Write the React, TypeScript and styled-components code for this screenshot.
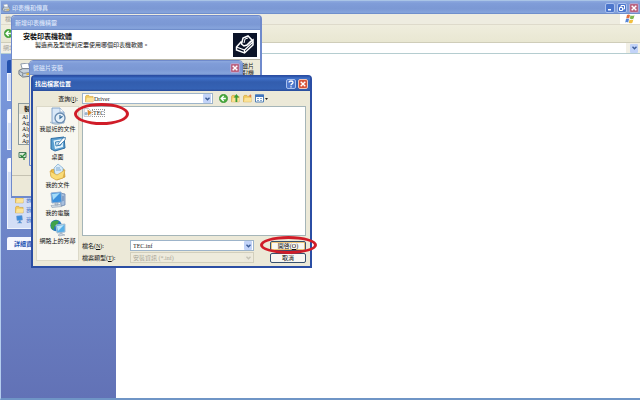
import React from "react";
import styled, { createGlobalStyle } from "styled-components";

const GlobalStyle = createGlobalStyle`
  * { box-sizing: border-box; }
  body {
    margin: 0;
    background: #fff;
    color: #111;
    font: 6px/8px "Liberation Serif", "Noto Sans CJK TC", serif;
  }
  button, input, select { font: inherit; color: inherit; margin: 0; padding: 0; }
  svg { display: block; flex: none; }
  h1, h2, p, ul { margin: 0; padding: 0; font-size: inherit; font-weight: inherit; }
  ul { list-style: none; }
`;

/* ---------- desktop and explorer window ---------- */

const Desktop = styled.div`
  position: relative;
  min-height: 100vh;
  display: flex;
  overflow: hidden;
`;

const Explorer = styled.main`
  flex: 1;
  min-width: 0;
  display: flex;
  flex-direction: column;
  border-left: 1px solid #b4cdee;
  border-bottom: 2px solid #6f95c6;
`;

const TitleBar = styled.header<{ $active?: boolean; $tall?: boolean }>`
  height: ${(p) => (p.$tall ? 15 : 14)}px;
  display: flex;
  align-items: center;
  gap: 2px;
  padding: 0 2px 0 ${(p) => (p.$active ? 2 : 3)}px;
  color: ${(p) => (p.$active ? "#fff" : "#dce6fa")};
  font-weight: ${(p) => (p.$active ? 700 : 500)};
  background: ${(p) =>
    p.$active
      ? "linear-gradient(#2a50a4, #3f70c8 15%, #325dae 40%, #3562b4 85%, #284b9a)"
      : "linear-gradient(#8ca8de, #7f9cd8 20%, #7b98d4 60%, #86a4dc 88%, #6685c4)"};
`;

const ExplorerTitle = styled(TitleBar)`
  height: 14px;
  border-top: 1px solid #a9c4e6;
  padding: 0 1px;
`;

const Title = styled.h1`
  flex: 1;
  white-space: nowrap;
`;

const CaptionButton = styled.button<{ $kind: "blue" | "muted" | "close" }>`
  width: 10px;
  height: 10px;
  display: grid;
  place-items: center;
  border: 1px solid ${(p) => (p.$kind === "blue" ? "#a9c0ee" : p.$kind === "close" ? "#f0c5b8" : "#b0a6d4")};
  border-radius: 2px;
  background: ${(p) => (p.$kind === "blue" ? "#4c76cc" : p.$kind === "close" ? "#d8553a" : "#bb6480")};
  color: #fff;
`;

const MenuBar = styled.nav`
  display: flex;
  align-items: stretch;
  height: 11px;
  background: #eeece0;
  border-bottom: 1px solid #dedacb;
  color: #9a9890;
`;

const MenuItem = styled.button`
  border: 0;
  background: none;
  padding: 0 4px;
`;

const FlagBox = styled.div`
  width: 20px;
  margin-left: auto;
  display: grid;
  place-items: center;
  background: #fff;
`;

const ToolBar = styled.div`
  height: 18px;
  display: flex;
  align-items: center;
  padding: 0 3px;
  background: linear-gradient(#efeddd, #e9e7d2);
  border-bottom: 1px solid #cfcdb9;
`;

const AddressBar = styled.div`
  height: 11px;
  display: flex;
  align-items: center;
  gap: 4px;
  padding: 0 2px;
  background: #f2f0e6;
  border-bottom: 1px solid #b5cdd0;
  color: #a5a39a;
`;

const AddressField = styled.input`
  flex: 1;
  min-width: 0;
  height: 10px;
  border: 0;
  background: #fff;
`;

const ExplorerBody = styled.div`
  flex: 1;
  display: flex;
`;

const Sidebar = styled.aside`
  width: 115px;
  display: flex;
  flex-direction: column;
  gap: 8px;
  padding: 6px 6px 0;
  background: linear-gradient(#7a9be0, #6c83c6 55%, #6272b6);
`;

const FolderView = styled.section`
  flex: 1;
  background: #fff;
`;

const TaskHeader = styled.h2<{ $primary?: boolean }>`
  height: 13px;
  padding: 3px 7px 2px;
  border-radius: 2px 2px 0 0;
  font-weight: 700;
  color: ${(p) => (p.$primary ? "#fff" : "#2a55b4")};
  background: ${(p) => (p.$primary ? "#2452ae" : "#f6f8fe")};
`;

const TaskList = styled.ul<{ $rows: number }>`
  min-height: ${(p) => p.$rows}px;
  display: flex;
  flex-direction: column;
  justify-content: flex-end;
  gap: 1px;
  padding: 4px 7px;
  background: #d3def6;
  border: 1px solid #f0f4fd;
`;

const TaskLink = styled.a`
  display: flex;
  align-items: center;
  gap: 2px;
  color: #4a76c8;
  text-decoration: none;
  white-space: nowrap;
`;

/* ---------- wizard window ---------- */

const Wizard = styled.section`
  position: absolute;
  left: 11px;
  top: 15px;
  width: 251px;
  border: 1px solid #6f8acc;
  border-right-width: 2px;
  border-bottom-width: 2px;
  border-radius: 4px 4px 0 0;
  background: #ece9d8;
  overflow: hidden;
`;

const WizardHead = styled.div`
  display: flex;
  justify-content: space-between;
  align-items: center;
  height: 30px;
  padding: 0 3px 0 11px;
  background: #fff;
  border-bottom: 1px solid #b9b6a6;
`;

const WizardText = styled.div`
  align-self: flex-start;
  padding-top: 3px;
`;

const Headline = styled.h2`
  font-size: 7px;
  font-weight: 700;
`;

const Subline = styled.p`
  padding-left: 12px;
  white-space: nowrap;
`;

const WizardIntro = styled.div`
  display: flex;
  justify-content: space-between;
  padding: 3px 6px 0 6px;
  height: 43px;
  line-height: 7px;
`;

const DriverTable = styled.table`
  width: 100px;
  margin-left: 6px;
  border: 1px solid #8d9a9c;
  border-spacing: 0;
  background: #f4f2ea;
  line-height: 6px;
  th { height: 10px; padding: 0 5px; text-align: left; font-weight: 700; background: #e6e3d3; }
  td { height: 6px; padding: 0 3px; }
`;

const SignedRow = styled.div`
  height: 30px;
  padding: 6px 6px 0;
`;

const WizardFooter = styled.div`
  height: 21px;
  border-top: 1px solid #c5c2b2;
`;

/* ---------- disk prompt ---------- */

const DiskPrompt = styled.section`
  position: absolute;
  left: 29px;
  top: 60px;
  width: 214px;
  border: 1px solid #6f8acc;
  border-radius: 4px 4px 0 0;
  background: #ece9d8;
  overflow: hidden;
`;

const PromptBody = styled.div`
  height: 90px;
`;

/* ---------- file dialog ---------- */

const FileDialog = styled.form`
  position: absolute;
  left: 31px;
  top: 75px;
  width: 281px;
  border: 2px solid #2b4ea4;
  border-top-width: 1px;
  border-radius: 4px 4px 0 0;
  background: #ece9d8;
`;

const DialogBody = styled.div`
  display: grid;
  grid-template-columns: 43px 1fr;
  column-gap: 3px;
  padding: 1px 4px 3px 3px;
`;

const LookRow = styled.div`
  grid-column: 1 / -1;
  display: flex;
  align-items: center;
  height: 13px;
  margin-bottom: 1px;
`;

const LookLabel = styled.label`
  width: 46px;
  padding-right: 4px;
  text-align: right;
`;

const Combo = styled.div<{ $disabled?: boolean }>`
  display: flex;
  align-items: center;
  height: 11px;
  padding: 0 1px 0 2px;
  border: 1px solid ${(p) => (p.$disabled ? "#d2cfbd" : "#9db4ca")};
  background: ${(p) => (p.$disabled ? "#eeebdc" : "#fff")};
  color: ${(p) => (p.$disabled ? "#aaa799" : "#222")};
`;

const LookCombo = styled(Combo)`
  width: 131px;
`;

const Select = styled.select`
  appearance: none;
  flex: 1;
  min-width: 0;
  border: 0;
  background: none;
  opacity: 1;
`;

const TextInput = styled.input`
  flex: 1;
  min-width: 0;
  border: 0;
  background: none;
  outline: 0;
`;

const Arrow = styled.span<{ $disabled?: boolean }>`
  width: 8px;
  height: 9px;
  display: grid;
  place-items: center;
  border-radius: 1px;
  color: ${(p) => (p.$disabled ? "#c5c2b4" : "#3c5c98")};
  background: ${(p) => (p.$disabled ? "#ece9dc" : "#c2d3f8")};
`;

const IconTools = styled.div`
  display: flex;
  align-items: center;
  gap: 3px;
  padding-left: 6px;
`;

const IconButton = styled.button`
  border: 0;
  background: none;
`;

const Places = styled.nav`
  display: flex;
  flex-direction: column;
  margin-bottom: 2px;
  background: #f8f7f0;
  border: 1px solid #dcd9c8;
`;

const Place = styled.button`
  display: flex;
  flex-direction: column;
  align-items: center;
  height: 28px;
  border: 0;
  background: none;
  white-space: nowrap;
`;

const Main = styled.div`
  display: flex;
  flex-direction: column;
  min-width: 0;
`;

const FileList = styled.ul`
  height: 130px;
  padding: 1px 0;
  border: 1px solid #a5b5b8;
  background: #fff;
`;

const FileItem = styled.li`
  display: flex;
  align-items: center;
`;

const FileName = styled.span`
  border: 1px dotted #999;
  line-height: 6px;
`;

const Fields = styled.div`
  display: grid;
  grid-template-columns: 45px 1fr 49px;
  column-gap: 3px;
  row-gap: 1px;
  align-items: center;
  padding-top: 4px;
`;

const ButtonCell = styled.div`
  padding-left: 13px;
  display: flex;
`;

const PushButton = styled.button<{ $primary?: boolean }>`
  flex: 1;
  height: 10px;
  line-height: 6px;
  border: 1px solid #36506e;
  border-radius: 2px;
  background: #f8f7f2;
  box-shadow: ${(p) => (p.$primary ? "inset 0 0 0 1px #edc477" : "none")};
`;

const Ring = styled.span<{ $x: number; $y: number; $w: number; $h: number }>`
  position: absolute;
  left: ${(p) => p.$x}px;
  top: ${(p) => p.$y}px;
  width: ${(p) => p.$w}px;
  height: ${(p) => p.$h}px;
  border: 3px solid #d01c28;
  border-radius: 50%;
  pointer-events: none;
`;

/* ---------- icons ---------- */

const Cross = () => (
  <svg width="6" height="6" viewBox="0 0 6 6" stroke="currentColor" strokeWidth="1.4">
    <path d="M.7.7l4.6 4.6M5.3.7L.7 5.3" />
  </svg>
);

const Chevron = () => (
  <svg width="5" height="4" viewBox="0 0 5 4" fill="none" stroke="currentColor" strokeWidth="1.4">
    <path d="M.5.8l2 2 2-2" />
  </svg>
);

const Printer = ({ size = 8 }: { size?: number }) => (
  <svg width={size} height={size} viewBox="0 0 16 16">
    <path d="M5 8L3 1l8-1 2 8z" fill="#fff" stroke="#8895a8" />
    <path d="M1 8l4-2h9l2 4-1 4-10 1-4-3z" fill="#c9d3dc" stroke="#66717d" />
    <path d="M2 9l4 2 9-1M5 14v-3" fill="none" stroke="#76828d" />
    <path d="M9 11l5-.5v2L9 13z" fill="#e8b53c" />
  </svg>
);

const WizardMark = () => (
  <svg width="24" height="24" viewBox="0 0 24 24">
    <path d="M0 0h24v24H0z" fill="#0b1328" />
    <path d="M3.500 14L8 9l5 3 7-5v5l-8.500 8L3.500 17z" fill="none" stroke="#fff" strokeWidth="1.500" />
    <path d="M3.500 14l8 3 8.500-8M11.500 17v3" fill="none" stroke="#fff" strokeWidth="1.300" />
    <path d="M8.500 11l1.500-6 5-2 4 4-5 5-3 1z" fill="#0b1328" stroke="#fff" strokeWidth="1.500" />
    <path d="M11 10l1-4 3-1" fill="none" stroke="#fff" />
  </svg>
);

const Flag = () => (
  <svg width="10" height="10" viewBox="0 0 10 10">
    <path d="M2 1c1-.8 2-.8 3 0L4.2 4.4c-1-.7-2-.7-3 0z" fill="#e4703f" />
    <path d="M5.5 1.2c1 .7 2.4.8 4 0L8.6 4.6c-1.2.8-2.7.7-3.7 0z" fill="#7fb850" />
    <path d="M1 5.1c1-.7 2-.7 3 0L3.2 8.6c-1-.8-2-.8-3 0z" fill="#5585d8" />
    <path d="M4.6 5.4c1 .7 2.4.7 3.8 0l-1 3.4c-1 .8-2.5.7-3.6 0z" fill="#f2bf3e" />
  </svg>
);

const GreenBall = () => (
  <svg width="9" height="9" viewBox="0 0 10 10">
    <circle cx="5" cy="5" r="4.6" fill="#4bab3e" stroke="#2b8a2c" strokeWidth=".6" />
    <path d="M5.2 2.3L2.4 5l2.8 2.7M2.6 5h5" fill="none" stroke="#fff" strokeWidth="1.5" />
  </svg>
);

const Folder = ({ mark }: { mark?: "up" | "new" }) => (
  <svg width="9" height="9" viewBox="0 0 10 10">
    <path d="M.5 2.5l1-1h2.7l1 1.2H9v6H.5z" fill="#f2c95c" stroke="#c99a35" strokeWidth=".6" />
    <path d="M1 8.6l1-4.3h7.8L8.800 8.700z" fill="#fbe398" />
    {mark === "up" && <path d="M5 9V4H3l3-4 3 4H7v5z" fill="#3a9d36" />}
    {mark === "new" && <path d="M8 0l.6 1.6L10 2l-1.400.6L8 4l-.6-1.400L6 2l1.400-.4z" fill="#e96a35" />}
  </svg>
);

const ViewMenu = () => (
  <svg width="13" height="9" viewBox="0 0 13 9">
    <path d="M.5 1h8v7h-8z" fill="#fff" stroke="#4f7fb5" />
    <path d="M0 .5h9V3H0z" fill="#3f74bd" />
    <path d="M2 4.5h2m1 0h2m-5 2h2m1 0h2" stroke="#86a8cd" />
    <path d="M10 4h3l-1.5 2z" fill="#222" />
  </svg>
);

const SetupFile = () => (
  <svg width="9" height="9" viewBox="0 0 8 8">
    <path d="M1 .5h4l2 2v5H1z" fill="#fff" stroke="#a5aeb8" strokeWidth=".6" />
    <circle cx="2.800" cy="5" r="1.500" fill="#9ab4cc" />
    <path d="M4 1.300l3.800 2.700L4.500 7z" fill="#dd8a2c" />
  </svg>
);

const SignedIcon = () => (
  <svg width="9" height="9" viewBox="0 0 9 9">
    <path d="M1 1.5h7v5H1z" fill="#dcebd8" stroke="#4d7b64" />
    <path d="M2.5 4l1.500 2 4-4M6 6v3" fill="none" stroke="#2c8b3c" strokeWidth="1.3" />
  </svg>
);

const SmallComputer = () => (
  <svg width="9" height="9" viewBox="0 0 18 18">
    <path d="M3 2l11-1 1 9-11 1zM8 11h3v3l3 2H5l3-2z" fill="#3b8cdc" stroke="#7c9fc8" />
  </svg>
);

const RecentIcon = () => (
  <svg width="18" height="18" viewBox="0 0 18 18">
    <path d="M3 1h8l4 4v11H3z" fill="#d9e8f8" stroke="#7d9ec6" strokeWidth=".9" />
    <path d="M11 1v4h4" fill="#fff" stroke="#8aa9cc" strokeWidth=".8" />
    <circle cx="11" cy="11" r="5" fill="#e4eff8" stroke="#6689ae" strokeWidth="1.300" />
    <path d="M11 8v3.200l2.500-2" fill="none" stroke="#356c9e" strokeWidth="1.200" />
    <path d="M1 15c4 3 9 2.500 12 1" stroke="#9db4c8" fill="none" />
  </svg>
);

const DesktopIcon = () => (
  <svg width="18" height="18" viewBox="0 0 18 18">
    <path d="M2 3.500L15 2l1 11-10 3-4-2z" fill="#5a9fd0" stroke="#2f6ea3" />
    <path d="M4.500 5.500l9-1.500.5 8-8 2z" fill="#e4f3fc" />
    <path d="M6.500 7l4-.500M6.500 7l.5 4 5-1V7" fill="none" stroke="#3c83b8" />
    <path d="M9 9l5-6 2.500-.500L16 5l-5 5-2 .500z" fill="#fff" stroke="#3675a8" strokeWidth=".8" />
  </svg>
);

const DocumentsIcon = () => (
  <svg width="18" height="18" viewBox="0 0 18 18">
    <path d="M2 7l4-1 2 2 7-2 1 8-8 3-6-4z" fill="#eebd42" stroke="#c4902c" strokeWidth=".7" />
    <path d="M5 5l4-4 5 4v7H6z" fill="#d8ebfa" stroke="#7ca9cd" strokeWidth=".7" />
    <path d="M7 5h4M7 7h5" stroke="#7eaad0" />
    <path d="M1 8l7 4 8-5-2 8-7 2-5-3z" fill="#fadc78" stroke="#d0a03b" strokeWidth=".6" />
  </svg>
);

const ComputerIcon = () => (
  <svg width="18" height="18" viewBox="0 0 18 18">
    <path d="M11 2l5 1v11l-4 1z" fill="#a8bfdc" stroke="#6b86ae" strokeWidth=".8" />
    <path d="M2 2l10-1 1 10-10 1z" fill="#3b90dc" stroke="#8eaed3" />
    <path d="M3 3l8-1-7 7z" fill="#a5dcf8" />
    <path d="M6 12h3v2H6zM2 14.500l9-1 2 2-10 1z" fill="#d3dce5" stroke="#8b9caf" strokeWidth=".6" />
    <path d="M14 5v5" stroke="#6482ae" />
  </svg>
);

const NetworkIcon = () => (
  <svg width="18" height="18" viewBox="0 0 18 18">
    <circle cx="7" cy="6.500" r="5.700" fill="#2878b8" />
    <path d="M2 4c2-3 6-3 8-2L8 6 5 8v3L2 9z" fill="#3fa24b" />
    <path d="M7 6l9-1v8l-8 1z" fill="#57b0e8" stroke="#a9bfd4" />
    <path d="M8 7l7-1-6 6z" fill="#bfe6fa" />
    <path d="M11 14h2v1l3 1-6 1-1-1 2-1z" fill="#c8d2dd" stroke="#8799ac" strokeWidth=".5" />
  </svg>
);

const places = [
  { label: "我最近的文件", icon: <RecentIcon /> },
  { label: "桌面", icon: <DesktopIcon /> },
  { label: "我的文件", icon: <DocumentsIcon /> },
  { label: "我的電腦", icon: <ComputerIcon /> },
  { label: "網路上的芳鄰", icon: <NetworkIcon /> },
];

const makers = ["Al", "Ag", "Alp", "Apo", "App"];

export default function App() {
  return (
    <Desktop>
      <GlobalStyle />
      <Explorer>
        <ExplorerTitle>
          <Printer />
          <Title>印表機和傳真</Title>
          <CaptionButton type="button" $kind="blue" aria-label="最小化">
            <svg width="6" height="6" viewBox="0 0 6 6"><path d="M1 4h3v1.5H1z" fill="#fff" /></svg>
          </CaptionButton>
          <CaptionButton type="button" $kind="blue" aria-label="還原">
            <svg width="6" height="6" viewBox="0 0 6 6" fill="none" stroke="#fff">
              <path d="M.5 2.5h3v3h-3zM2 2V.5h3.5V4H4" />
            </svg>
          </CaptionButton>
          <CaptionButton type="button" $kind="muted" aria-label="關閉"><Cross /></CaptionButton>
        </ExplorerTitle>
        <MenuBar>
          <MenuItem type="button">檔</MenuItem>
          <FlagBox><Flag /></FlagBox>
        </MenuBar>
        <ToolBar>
          <IconButton type="button" aria-label="上一頁"><GreenBall /></IconButton>
        </ToolBar>
        <AddressBar>
          <label htmlFor="address">網址</label>
          <AddressField id="address" />
          <Arrow><Chevron /></Arrow>
        </AddressBar>
        <ExplorerBody>
          <Sidebar>
            <section>
              <TaskHeader $primary />
              <TaskList $rows={28} />
            </section>
            <section>
              <TaskHeader />
              <TaskList $rows={28} />
            </section>
            <section>
              <TaskHeader />
              <TaskList $rows={58}>
                <li><TaskLink href="#panel"><Folder />我</TaskLink></li>
                <li><TaskLink href="#documents"><Folder />我</TaskLink></li>
                <li><TaskLink href="#computer"><SmallComputer />我</TaskLink></li>
              </TaskList>
            </section>
            <section>
              <TaskHeader>詳細資</TaskHeader>
            </section>
          </Sidebar>
          <FolderView />
        </ExplorerBody>
      </Explorer>

      <Wizard>
        <TitleBar><Title>新增印表機精靈</Title></TitleBar>
        <WizardHead>
          <WizardText>
            <Headline>安裝印表機軟體</Headline>
            <Subline>製造商及型號判定要使用哪個印表機軟體。</Subline>
          </WizardText>
          <WizardMark />
        </WizardHead>
        <WizardIntro>
          <Printer size={15} />
          <p>磁片<br />對機</p>
        </WizardIntro>
        <DriverTable>
          <thead><tr><th>製</th></tr></thead>
          <tbody>{makers.map((m) => <tr key={m}><td>{m}</td></tr>)}</tbody>
        </DriverTable>
        <SignedRow><SignedIcon /></SignedRow>
        <WizardFooter />
      </Wizard>

      <DiskPrompt>
        <TitleBar>
          <Title>從磁片安裝</Title>
          <CaptionButton type="button" $kind="muted" aria-label="關閉"><Cross /></CaptionButton>
        </TitleBar>
        <PromptBody />
      </DiskPrompt>

      <FileDialog onSubmit={(e) => e.preventDefault()}>
        <TitleBar $active $tall>
          <Title>找出檔案位置</Title>
          <CaptionButton type="button" $kind="blue" aria-label="說明">
            <svg width="6" height="8" viewBox="0 0 6 8" fill="none" stroke="#fff" strokeWidth="1.3">
              <path d="M1 2.5C1 .5 5 .5 5 2.5 5 4 3 3.7 3 5.2M3 6.2v1.3" />
            </svg>
          </CaptionButton>
          <CaptionButton type="button" $kind="close" aria-label="關閉"><Cross /></CaptionButton>
        </TitleBar>
        <DialogBody>
          <LookRow>
            <LookLabel htmlFor="look">查詢(<u>I</u>):</LookLabel>
            <LookCombo>
              <Folder />
              <Select id="look"><option>Driver</option></Select>
              <Arrow><Chevron /></Arrow>
            </LookCombo>
            <IconTools>
              <IconButton type="button" aria-label="上一頁"><GreenBall /></IconButton>
              <IconButton type="button" aria-label="往上一層"><Folder mark="up" /></IconButton>
              <IconButton type="button" aria-label="新資料夾"><Folder mark="new" /></IconButton>
              <IconButton type="button" aria-label="檢視"><ViewMenu /></IconButton>
            </IconTools>
          </LookRow>
          <Places>
            {places.map((p) => (
              <Place type="button" key={p.label}>{p.icon}{p.label}</Place>
            ))}
          </Places>
          <Main>
            <FileList>
              <FileItem><SetupFile /><FileName>TEC</FileName></FileItem>
            </FileList>
            <Fields>
              <label htmlFor="name">檔名(<u>N</u>):</label>
              <Combo>
                <TextInput id="name" defaultValue="TEC.inf" />
                <Arrow><Chevron /></Arrow>
              </Combo>
              <ButtonCell><PushButton type="submit" $primary>開啓(<u>O</u>)</PushButton></ButtonCell>
              <label htmlFor="type">檔案類型(<u>T</u>):</label>
              <Combo $disabled>
                <Select id="type" disabled><option>安裝資訊 (*.inf)</option></Select>
                <Arrow $disabled><Chevron /></Arrow>
              </Combo>
              <ButtonCell><PushButton type="button">取消</PushButton></ButtonCell>
            </Fields>
          </Main>
        </DialogBody>
        <Ring $x={41} $y={27} $w={55} $h={22} />
        <Ring $x={227} $y={160} $w={57} $h={18} />
      </FileDialog>
    </Desktop>
  );
}
